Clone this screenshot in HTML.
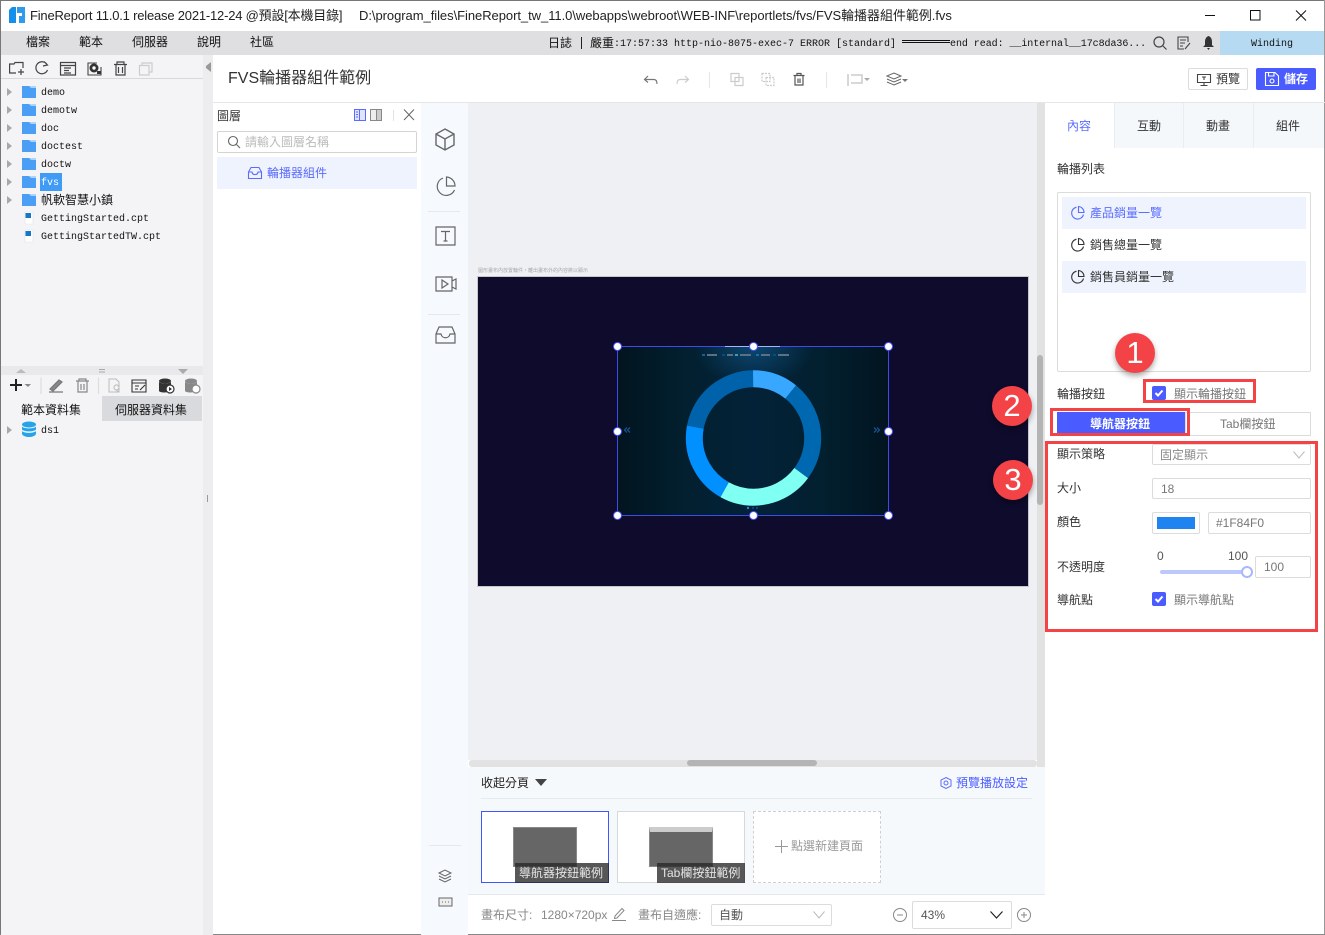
<!DOCTYPE html>
<html><head><meta charset="utf-8"><style>
*{box-sizing:border-box;margin:0;padding:0}
html,body{width:1325px;height:935px;overflow:hidden;background:#fff}
body{position:relative;font-family:"Liberation Sans","Noto Sans CJK TC",sans-serif;font-size:12px;color:#333}
.a{position:absolute}
.t{position:absolute;white-space:nowrap;line-height:16px}
.m{font-family:"Liberation Mono","Noto Sans CJK TC",monospace;font-size:10px;color:#111}
.b{position:absolute;border:1px solid #dcdcdc;background:#fff;border-radius:2px}
.r{position:absolute;border:3px solid #f44347}
.n{position:absolute;width:40px;height:40px;border-radius:50%;background:#f44347;color:#fff;font-size:31px;line-height:40px;text-align:center;box-shadow:0 3px 6px rgba(0,0,0,.35)}
.h{position:absolute;width:9px;height:9px;border-radius:50%;background:#fff;border:1px solid #4a55ff}
svg{position:absolute;overflow:visible;fill:none}
.g{color:#888}
</style></head><body>
<!-- window -->
<div class="a" style="left:0;top:0;width:1325px;height:1px;background:#777"></div>
<div class="a" style="left:0;top:0;width:1px;height:935px;background:#777"></div>
<div class="a" style="left:1324px;top:0;width:1px;height:935px;background:#999"></div>
<div class="a" style="left:0;top:934px;width:1325px;height:1px;background:#888"></div>
<svg style="left:9px;top:7px" width="16" height="17"><path d="M3 0H7V16H0V3Z" fill="#1590e8"/><path d="M8 0H16V16H10V9H13V6H8Z" fill="#2f9bec"/><path d="M7 6H13V9H7Z" fill="#fff"/></svg>
<div class="t" style="left:30px;top:8px;font-size:13px;color:#222;letter-spacing:-.2px">FineReport 11.0.1 release 2021-12-24 @預設[本機目錄]</div>
<div class="t" style="left:359px;top:8px;font-size:13px;color:#222;letter-spacing:-.05px">D:\program_files\FineReport_tw_11.0\webapps\webroot\WEB-INF\reportlets/fvs/FVS輪播器組件範例.fvs</div>
<svg style="left:1205px;top:10px" width="110" height="12" stroke="#111" stroke-width="1"><path d="M0 5.500H10M45.500 .5H55V10H45.500ZM91 .5L101 10.500M101 .5L91 10.500"/></svg>
<!-- menu -->
<div class="a" style="left:1px;top:31px;width:1323px;height:24px;background:#dfdfe1"></div>
<div class="a" style="left:1220px;top:31px;width:104px;height:24px;background:#b6daf2"></div>
<div class="t" style="left:26px;top:34px;font-size:12px;color:#111">檔案</div>
<div class="t" style="left:79px;top:34px;font-size:12px;color:#111">範本</div>
<div class="t" style="left:132px;top:34px;font-size:12px;color:#111">伺服器</div>
<div class="t" style="left:197px;top:34px;font-size:12px;color:#111">說明</div>
<div class="t" style="left:250px;top:34px;font-size:12px;color:#111">社區</div>
<div class="t" style="left:548px;top:35px;font-size:12px;color:#111">日誌</div>
<div class="a" style="left:581px;top:37px;width:1px;height:12px;background:#222"></div>
<div class="t" style="left:590px;top:35px;font-size:12px;color:#111">嚴重</div>
<div class="t m" style="left:614px;top:37px">:17:57:33 http-nio-8075-exec-7 ERROR [standard] <span style="display:inline-block;width:48px;height:3px;border-top:1px solid #111;border-bottom:1px solid #111;vertical-align:3px"></span><span style="letter-spacing:-.06px">end read: __internal__17c8da36...</span></div>
<div class="t m" style="left:1251px;top:37px">Winding</div>
<svg style="left:1153px;top:36px" width="14" height="14" stroke="#444" stroke-width="1.200"><circle cx="6" cy="6" r="5"/><path d="M10 10L13.500 13.500"/></svg>
<svg style="left:1177px;top:36px" width="14" height="14" stroke="#444" stroke-width="1.100"><path d="M11 6V1H1V13H7M3 4H9M3 7H8M3 10H6M8 13L13 7"/></svg>
<svg style="left:1202px;top:36px" width="13" height="14"><path d="M6.500 0C9 1 10 3 10 6V9L12 11H1L3 9V6C3 3 4 1 6.500 0ZM5 12H8L6.500 14Z" fill="#333"/></svg>
<!-- left panel -->
<div class="a" style="left:1px;top:55px;width:202px;height:880px;background:#f4f4f6"></div>
<div class="a" style="left:203px;top:55px;width:10px;height:880px;background:#ededef"></div>
<div class="a" style="left:1px;top:78px;width:202px;height:1px;background:#d8d8da"></div>
<div class="a" style="left:206px;top:62px;border:4px solid transparent;border-right:5px solid #999;border-left:0;height:10px"></div>
<div class="a" style="left:207px;top:495px;width:1px;height:7px;background:#999"></div>
<svg style="left:9px;top:61px" width="150" height="16" stroke="#444" stroke-width="1.200">
<path d="M7 12H.6V3H5L6 1.500H14V7M12 8V14M9 11H15"/>
<path d="M38 3.500A6 6 0 1 0 38.500 9M35 .5L38.500 4L34 5"/>
<path d="M51.500 1.500H66.500V14H51.500ZM51.500 4.500H66.500M55 7H62M55 9.500H60M55 12H62"/>
<path d="M88 2H79V14H92V6" stroke-width="1.100"/><circle cx="85" cy="7" r="4.500" fill="#333" stroke="none"/><circle cx="85" cy="7" r="1.700" fill="#fff" stroke="none"/><rect x="88" y="10" width="4" height="3" fill="#333" stroke="none"/>
<path d="M105 3.500H118M108 3.500V1H115V3.500M107 3.500V14H116V3.500M109.500 6V12M113.500 6V12"/>
<path d="M133 5V2H143V11H140M130.500 4.500H140V14H130.500Z" stroke="#ccc"/>
</svg>
<div class="a" style="left:40px;top:173px;width:22px;height:18px;background:#3f9bf5"></div>
<svg style="left:0;top:0" width="220" height="250">
<g fill="#a8a8a8"><path d="M7 88l5 4-5 4zM7 106l5 4-5 4zM7 124l5 4-5 4zM7 142l5 4-5 4zM7 160l5 4-5 4zM7 178l5 4-5 4zM7 196l5 4-5 4z"/></g>
<g fill="#4a9ff5"><path d="M22 86H36V98H22ZM22 104H36V116H22ZM22 122H36V134H22ZM22 140H36V152H22ZM22 158H36V170H22ZM22 176H36V188H22ZM22 194H36V206H22Z"/></g>
<g fill="#fff"><path d="M29 86H36V88H31ZM29 104H36V106H31ZM29 122H36V124H31ZM29 140H36V142H31ZM29 158H36V160H31ZM29 176H36V178H31ZM29 194H36V196H31Z" opacity=".55"/></g>
<path d="M25 212H33V224H25Z M25 230H33V242H25Z" fill="#fff" stroke="#e2e2e2" stroke-width=".6"/>
<path d="M25.500 213H31V218H25.500ZM25.500 231H31V236H25.500Z" fill="#1677c9"/>
</svg>
<div class="t m" style="left:41px;top:86px">demo</div>
<div class="t m" style="left:41px;top:104px">demotw</div>
<div class="t m" style="left:41px;top:122px">doc</div>
<div class="t m" style="left:41px;top:140px">doctest</div>
<div class="t m" style="left:41px;top:158px">doctw</div>
<div class="t m" style="left:41px;top:176px;color:#fff">fvs</div>
<div class="t" style="left:41px;top:192px;font-size:12px;color:#111">帆軟智慧小鎮</div>
<div class="t m" style="left:41px;top:212px">GettingStarted.cpt</div>
<div class="t m" style="left:41px;top:230px">GettingStartedTW.cpt</div>
<!-- lower left -->
<div class="a" style="left:1px;top:366px;width:202px;height:9px;background:#e9e9eb"></div>
<svg style="left:0;top:366px" width="203" height="9"><path d="M16 7L21 3L26 7Z" fill="#bbb"/><path d="M178 3H188L183 8Z" fill="#aaa"/><path d="M99 3.500H105M99 6H105" stroke="#aaa"/></svg>
<svg style="left:8px;top:377px" width="195" height="18" stroke="#555" stroke-width="1.200">
<path d="M8 2V14M2 8H14" stroke="#222" stroke-width="2"/><path d="M16.500 7H23L20 10Z" fill="#888" stroke="none"/>
<path d="M33 .5V17M90.500 .5V17" stroke="#ddd"/>
<path d="M42 12L51 3L54 5L45 14ZM41 15H55" stroke="#777" fill="#888"/>
<path d="M68 4H81M71 4V2H78V4M70 4V15H79V4M73 7V13M76 7V13" stroke="#888"/>
<path d="M101 2H108L111 5V15H101ZM106 10.500A2.500 2.500 0 1 0 106 10.400M108 13L111 15" stroke="#bbb" stroke-width="1"/>
<path d="M124 3H138V15H124ZM124 6H138M127 9H131M127 12H130M132 13L137 8" stroke="#333" stroke-width="1.100"/>
<ellipse cx="157" cy="4" rx="6" ry="2.500" fill="#333" stroke="none"/><path d="M151 5V14C152 16 160 16 163 14V5C160 7 154 7 151 5Z" fill="#333" stroke="none"/><circle cx="162" cy="12" r="4" fill="#fff" stroke="#333"/><path d="M161 10L164 12L161 14Z" fill="#333" stroke="none"/>
<ellipse cx="183" cy="4" rx="6" ry="2.500" fill="#888" stroke="none"/><path d="M177 5V14C178 16 186 16 189 14V5C186 7 180 7 177 5Z" fill="#888" stroke="none"/><circle cx="188" cy="12" r="4" fill="#fff" stroke="#888"/>
</svg>
<div class="a" style="left:102px;top:396px;width:100px;height:25px;background:#d9dadd"></div>
<div class="t" style="left:21px;top:402px;font-size:12px;color:#111">範本資料集</div>
<div class="t" style="left:115px;top:402px;font-size:12px;color:#111">伺服器資料集</div>
<svg style="left:0;top:420px" width="40" height="20"><path d="M7 6l5 4-5 4z" fill="#a8a8a8"/><ellipse cx="29" cy="4.500" rx="7" ry="3" fill="#27a3ea"/><path d="M22 6.500C24 9 34 9 36 6.500V9.500C34 12 24 12 22 9.500ZM22 11C24 13.500 34 13.500 36 11V14C34 18 24 18 22 14Z" fill="#27a3ea"/></svg>
<div class="t m" style="left:41px;top:424px">ds1</div>
<!-- header -->
<div class="a" style="left:213px;top:102px;width:1112px;height:1px;background:#e6e6e8"></div>
<div class="t" style="left:228px;top:71px;font-size:16px;color:#333">FVS輪播器組件範例</div>
<svg style="left:640px;top:71px" width="280" height="18" stroke="#777" stroke-width="1.200">
<path d="M8 5L4.500 8.500L8 11.500M5 8.500H14C16 8.500 17 10 17 13"/>
<path d="M45 5L48.500 8.500L45 11.500M48 8.500H40C38 8.500 37 10 37 13" stroke="#ccc"/>
<path d="M69.500 1V17M186.500 1V17" stroke="#e8e8e8"/>
<path d="M91 2.500H99V10.500H91ZM95 6.500H103V14.500H95Z" stroke="#ccc"/>
<path d="M122 2.500H130V10.500H122ZM126 6.500H134V14.500H126Z" stroke="#ccc" stroke-dasharray="2 1"/>
<path d="M153.500 4.500H164.500M157 4.500V2.500H161V4.500M155 4.500V14H163V4.500M158 7.500V12M160 7.500V12" stroke="#555"/>
<path d="M208 3V15M211 4H222V12H211" stroke="#ccc" stroke-width="1.500"/><path d="M224 7H230L227 10Z" fill="#aaa" stroke="none"/>
<path d="M247 5L254 2L261 5L254 8ZM247 8L254 11L261 8M247 11L254 14L261 11" stroke="#666" stroke-width="1"/><path d="M262 8H268L265 11Z" fill="#777" stroke="none"/>
</svg>
<div class="b" style="left:1188px;top:68px;width:60px;height:22px"></div>
<svg style="left:1197px;top:73px" width="14" height="13" stroke="#444" stroke-width="1.100"><path d="M.5 1.500H13.500V9.500H.5ZM7 9.500V12.500M3.500 12.500H10.500M5 4H9M7 4V7"/></svg>
<div class="t" style="left:1216px;top:71px;font-size:12px;color:#333">預覽</div>
<div class="a" style="left:1256px;top:68px;width:60px;height:22px;background:#4a5cff;border-radius:2px"></div>
<svg style="left:1265px;top:72px" width="14" height="14" stroke="#fff" stroke-width="1.100"><path d="M.5.5H10L13.500 4V13.500H.5ZM3.500.5V4H9V.5"/><circle cx="7" cy="9" r="2"/></svg>
<div class="t" style="left:1284px;top:71px;font-size:12px;color:#fff;font-weight:bold">儲存</div>
<!-- layers -->
<div class="t" style="left:217px;top:108px;font-size:12px;color:#333">圖層</div>
<svg style="left:354px;top:109px" width="62" height="13"><rect x=".5" y=".5" width="11" height="11" fill="#dfe4ff" stroke="#5a6cff"/><path d="M5.500 .5V11.500M2 3H4M2 5.500H4M2 8H4" stroke="#5a6cff"/><rect x="16.500" y=".5" width="11" height="11" fill="#eee" stroke="#888"/><path d="M22.500 .5V11.500" stroke="#888"/><rect x="23" y="1" width="4" height="10" fill="#ccc"/><path d="M39.500 1V12" stroke="#e3e3e3"/><path d="M50 .5L60 11M60 .5L50 11" stroke="#666"/></svg>
<div class="b" style="left:217px;top:131px;width:200px;height:22px;border-color:#d4d4d4"></div>
<svg style="left:227px;top:135px" width="14" height="14" stroke="#666" stroke-width="1.100"><circle cx="6" cy="6" r="4.500"/><path d="M9.500 9.500L13 13"/></svg>
<div class="t" style="left:245px;top:134px;font-size:12px;color:#bbb">請輸入圖層名稱</div>
<div class="a" style="left:217px;top:157px;width:200px;height:32px;background:#eff3fd"></div>
<svg style="left:248px;top:166px" width="14" height="14" stroke="#5a6cff" stroke-width="1.100"><path d="M3 1.500H11L13.500 6V12.500H.5V6ZM.5 6H4C4.500 9.500 9.500 9.500 10 6H13.500"/></svg>
<div class="t" style="left:267px;top:165px;font-size:12px;color:#5a6cff">輪播器組件</div>
<!-- rail -->
<div class="a" style="left:421px;top:103px;width:47px;height:832px;background:#f6f9fd"></div>
<svg style="left:428px;top:125px" width="36" height="225" stroke="#666" stroke-width="1.400">
<path d="M17 4L26 9V20L17 25L8 20V9ZM8 9L17 14L26 9M17 14V25"/>
<path d="M15 53A9 9 0 1 0 26.500 65M18.500 52A9 9 0 0 1 27 61H18.500Z" stroke-width="1.200"/>
<path d="M0 86.500H32" stroke="#e6e8ea" stroke-width="1"/>
<path d="M8 102H27V120H8ZM13 106.500H22M17.500 106.500V116M15.500 116H19.500" stroke-width="1.200"/>
<path d="M8 152H24V166H8ZM24 156L28 154V164L24 162M14 155V163L20 159Z" stroke-width="1.200"/>
<path d="M0 189.500H32" stroke="#e6e8ea" stroke-width="1"/>
<path d="M11 202H24L27 209V218H8V209ZM8 209H13C14 214 21 214 22 209H27" stroke-width="1.200"/>
</svg>
<div class="a" style="left:429px;top:845px;width:32px;height:1px;background:#e6e8ea"></div>
<svg style="left:438px;top:869px" width="16" height="40" stroke="#666" stroke-width="1"><path d="M1 4L7 1L13 4L7 7ZM1 7L7 10L13 7M1 10L7 13L13 10"/><path d="M1 29H14V37H1Z" fill="#eee"/><path d="M4 33H5M7 33H8M10 33H11"/></svg>
<!-- canvas -->
<div class="a" style="left:468px;top:103px;width:569px;height:657px;background:#eff0f4"></div>
<div class="a" style="left:1037px;top:103px;width:8px;height:664px;background:#e2e2e2"></div>
<div class="a" style="left:1037px;top:355px;width:6px;height:150px;background:#b4b4b4;border-radius:3px"></div>
<div class="t" style="left:478px;top:263px;font-size:5px;color:#aaa">圖形畫布內放置輪件，離出畫布外的內容將以顯示</div>
<div class="a" style="left:477px;top:276px;width:552px;height:311px;background:#0f0b2d;border:1px solid #c8c8cc"></div>
<div class="a" style="left:618px;top:347px;width:271px;height:169px;background:linear-gradient(90deg,#021420 0%,#02202f 25%,#032238 50%,#02202f 75%,#021420 100%)"></div>
<div class="a" style="left:618px;top:347px;width:271px;height:40px;background:radial-gradient(ellipse 22% 100% at 50% 0%,rgba(20,100,160,.55),rgba(0,0,0,0))"></div>
<svg style="left:618px;top:347px" width="271" height="169" viewBox="0 0 271 169">
<g transform="rotate(-90 135.500 91)" fill="none" stroke-width="17">
<circle cx="135.500" cy="91" r="59.200" pathLength="360" stroke="#37a7ff" stroke-dasharray="39 321"/>
<circle cx="135.500" cy="91" r="59.200" pathLength="360" stroke="#0068b0" stroke-dasharray="87.500 272.500" stroke-dashoffset="-39"/>
<circle cx="135.500" cy="91" r="59.200" pathLength="360" stroke="#80fff3" stroke-dasharray="83 277" stroke-dashoffset="-126.500"/>
<circle cx="135.500" cy="91" r="59.200" pathLength="360" stroke="#0090ff" stroke-dasharray="71.500 288.500" stroke-dashoffset="-209.500"/>
<circle cx="135.500" cy="91" r="59.200" pathLength="360" stroke="#0062aa" stroke-dasharray="79 281" stroke-dashoffset="-281"/>
</g>
<path d="M9 80.500L6.500 83L9 85.500M12 80.500L9.500 83L12 85.500M259 80.500L261.500 83L259 85.500M256 80.500L258.500 83L256 85.500" stroke="#1a5fa5" fill="none"/>
<g fill="#1f84f0"><circle cx="130" cy="161" r="1.200"/><circle cx="135" cy="161" r="1" opacity=".5"/><circle cx="139" cy="161" r="1" opacity=".5"/></g>
<g fill="#1f9bf0"><rect x="84" y="7.500" width="3" height="1"/><rect x="104" y="7.500" width="3" height="1" fill="#0068b0"/><rect x="117" y="7.500" width="3" height="1" fill="#80fff3"/><rect x="138" y="7.500" width="3" height="1"/><rect x="155" y="7.500" width="3" height="1" fill="#0068b0"/></g>
<g fill="#5f6f7f"><rect x="89" y="7" width="10" height="2"/><rect x="109" y="7" width="6" height="2"/><rect x="122" y="7" width="11" height="2"/><rect x="143" y="7" width="9" height="2"/><rect x="160" y="7" width="11" height="2"/></g>
</svg>
<div class="a" style="left:617px;top:346px;width:272px;height:170px;border:1px solid #3f4be8"></div>
<div class="a" style="left:725px;top:346px;width:55px;height:1px;background:#a8b4ff"></div>
<div class="h" style="left:613px;top:342px"></div><div class="h" style="left:749px;top:342px"></div><div class="h" style="left:884px;top:342px"></div>
<div class="h" style="left:613px;top:427px"></div><div class="h" style="left:884px;top:427px"></div>
<div class="h" style="left:613px;top:511px"></div><div class="h" style="left:749px;top:511px"></div><div class="h" style="left:884px;top:511px"></div>
<!-- h scroll -->
<div class="a" style="left:469px;top:760px;width:568px;height:7px;background:#e2e2e2;border-radius:3px"></div>
<div class="a" style="left:687px;top:760px;width:130px;height:6px;background:#b4b4b4;border-radius:3px"></div>
<!-- pages -->
<div class="a" style="left:468px;top:767px;width:577px;height:127px;background:#f6f9fc"></div>
<div class="a" style="left:468px;top:894px;width:577px;height:1px;background:#e5e9ef"></div>
<div class="a" style="left:481px;top:798px;width:551px;height:1px;background:#e6ebf0"></div>
<div class="t" style="left:481px;top:775px;font-size:12px;color:#222">收起分頁</div>
<div class="a" style="left:535px;top:779px;border:6px solid transparent;border-top:7px solid #444;border-bottom:0"></div>
<svg style="left:940px;top:777px" width="12" height="12" stroke="#5a6cff" stroke-width="1"><path d="M6 .5L11 3V9L6 11.500L1 9V3Z"/><circle cx="6" cy="6" r="2"/></svg>
<div class="t" style="left:956px;top:775px;font-size:12px;color:#4a5cff">預覽播放設定</div>
<div class="a" style="left:481px;top:811px;width:128px;height:72px;background:#fff;border:1px solid #3f55ff"></div>
<div class="a" style="left:513px;top:827px;width:64px;height:40px;background:#666;border:1px solid #888"></div>
<div class="a" style="left:515px;top:863px;width:94px;height:20px;background:rgba(40,40,40,.78)"></div>
<div class="t" style="left:519px;top:865px;font-size:12px;color:#e4e4e4">導航器按鈕範例</div>
<div class="a" style="left:617px;top:811px;width:128px;height:72px;background:#fff;border:1px solid #d5d9de"></div>
<div class="a" style="left:649px;top:827px;width:64px;height:40px;background:#666;border:1px solid #888;border-top:5px solid #ccc"></div>
<div class="a" style="left:657px;top:863px;width:88px;height:20px;background:rgba(40,40,40,.78)"></div>
<div class="t" style="left:661px;top:865px;font-size:12px;color:#e4e4e4">Tab欄按鈕範例</div>
<div class="a" style="left:753px;top:811px;width:128px;height:72px;background:#fff;border:1px dashed #d0d0d0"></div>
<svg style="left:775px;top:840px" width="13" height="13" stroke="#999"><path d="M6.500 0V13M0 6.500H13"/></svg>
<div class="t" style="left:791px;top:838px;font-size:12px;color:#999">點選新建頁面</div>
<!-- bottom bar -->
<div class="t g" style="left:481px;top:907px;font-size:12px">畫布尺寸:</div>
<div class="t g" style="left:541px;top:907px;font-size:12px">1280×720px</div>
<svg style="left:612px;top:907px" width="14" height="14" stroke="#888"><path d="M3 9L10 1.500L12 3.500L5 11L2.500 11.500ZM0 13.500H14"/></svg>
<div class="t g" style="left:638px;top:907px;font-size:12px">畫布自適應:</div>
<div class="b" style="left:711px;top:904px;width:121px;height:22px"></div>
<div class="t" style="left:719px;top:907px;font-size:12px;color:#555">自動</div>
<svg style="left:813px;top:911px" width="12" height="8" stroke="#bbb"><path d="M.5 .5L6 7L11.500 .5"/></svg>
<svg style="left:893px;top:908px" width="14" height="14" stroke="#888"><circle cx="7" cy="7" r="6.500"/><path d="M4 7H10"/></svg>
<div class="b" style="left:912px;top:901px;width:100px;height:28px"></div>
<div class="t" style="left:921px;top:907px;font-size:12px;color:#555">43%</div>
<svg style="left:990px;top:911px" width="13" height="8" stroke="#222" stroke-width="1.200"><path d="M.5 .5L6.500 7L12.500 .5"/></svg>
<svg style="left:1017px;top:908px" width="14" height="14" stroke="#888"><circle cx="7" cy="7" r="6.500"/><path d="M4 7H10M7 4V10"/></svg>
<!-- right panel -->
<div class="a" style="left:1114px;top:103px;width:210px;height:45px;background:#f5f8fb"></div>
<div class="a" style="left:1114px;top:103px;width:1px;height:45px;background:#e8edf2"></div>
<div class="a" style="left:1183px;top:103px;width:1px;height:45px;background:#e8edf2"></div>
<div class="a" style="left:1253px;top:103px;width:1px;height:45px;background:#e8edf2"></div>
<div class="t" style="left:1067px;top:118px;font-size:12px;color:#5a6cff">內容</div>
<div class="t" style="left:1137px;top:118px;font-size:12px;color:#333">互動</div>
<div class="t" style="left:1206px;top:118px;font-size:12px;color:#333">動畫</div>
<div class="t" style="left:1276px;top:118px;font-size:12px;color:#333">組件</div>
<div class="t" style="left:1057px;top:161px;font-size:12px">輪播列表</div>
<div class="b" style="left:1057px;top:192px;width:254px;height:180px"></div>
<div class="a" style="left:1062px;top:197px;width:244px;height:32px;background:#eef3fe"></div>
<div class="a" style="left:1062px;top:261px;width:244px;height:32px;background:#eef3fe"></div>
<svg style="left:1071px;top:206px" width="14" height="78" fill="none"><g stroke="#5a6cff" stroke-width="1.100"><path d="M5.500 1.200A6 6 0 1 0 12.500 8.500M7.500 .5A6 6 0 0 1 13 6.500H7.500Z"/></g><g stroke="#333" stroke-width="1.100"><path d="M5.500 33.200A6 6 0 1 0 12.500 40.500M7.500 32.500A6 6 0 0 1 13 38.500H7.500Z"/><path d="M5.500 65.200A6 6 0 1 0 12.500 72.500M7.500 64.500A6 6 0 0 1 13 70.500H7.500Z"/></g></svg>
<div class="t" style="left:1090px;top:205px;font-size:12px;color:#5a6cff">產品銷量一覽</div>
<div class="t" style="left:1090px;top:237px;font-size:12px">銷售總量一覽</div>
<div class="t" style="left:1090px;top:269px;font-size:12px">銷售員銷量一覽</div>
<div class="t" style="left:1057px;top:386px;font-size:12px">輪播按鈕</div>
<div class="a" style="left:1152px;top:386px;width:14px;height:14px;background:#4a5cff;border-radius:2px"></div>
<svg style="left:1152px;top:386px" width="14" height="14" stroke="#fff" stroke-width="2"><path d="M3.500 7L6 9.500L10.500 4.500"/></svg>
<div class="t" style="left:1174px;top:386px;font-size:12px;color:#777">顯示輪播按鈕</div>
<div class="a" style="left:1057px;top:412px;width:128px;height:24px;background:#4a5cff"></div>
<div class="t" style="left:1090px;top:416px;font-size:12px;color:#fff;font-weight:bold">導航器按鈕</div>
<div class="b" style="left:1185px;top:412px;width:126px;height:24px;border-radius:0"></div>
<div class="t" style="left:1220px;top:416px;font-size:12px;color:#777">Tab欄按鈕</div>
<div class="t" style="left:1057px;top:446px;font-size:12px">顯示策略</div>
<div class="b" style="left:1152px;top:444px;width:159px;height:21px"></div>
<div class="t" style="left:1160px;top:447px;font-size:12px;color:#888">固定顯示</div>
<svg style="left:1293px;top:451px" width="12" height="8" stroke="#bbb"><path d="M.5 .5L6 7L11.500 .5"/></svg>
<div class="t" style="left:1057px;top:480px;font-size:12px">大小</div>
<div class="b" style="left:1152px;top:478px;width:159px;height:21px"></div>
<div class="t" style="left:1161px;top:481px;font-size:12px;color:#777">18</div>
<div class="t" style="left:1057px;top:514px;font-size:12px">顏色</div>
<div class="b" style="left:1152px;top:512px;width:48px;height:22px"></div>
<div class="a" style="left:1157px;top:517px;width:38px;height:12px;background:#1f84f0"></div>
<div class="b" style="left:1208px;top:512px;width:103px;height:22px"></div>
<div class="t" style="left:1216px;top:515px;font-size:12px;color:#777">#1F84F0</div>
<div class="t" style="left:1157px;top:548px;font-size:12px;color:#555">0</div>
<div class="t" style="left:1228px;top:548px;font-size:12px;color:#555">100</div>
<div class="t" style="left:1057px;top:559px;font-size:12px">不透明度</div>
<div class="a" style="left:1160px;top:570px;width:87px;height:4px;background:#bdc8ff;border-radius:2px"></div>
<div class="a" style="left:1241px;top:566px;width:12px;height:12px;border-radius:50%;background:#fff;border:2px solid #a9b7ff"></div>
<div class="b" style="left:1255px;top:556px;width:56px;height:22px"></div>
<div class="t" style="left:1264px;top:559px;font-size:12px;color:#777">100</div>
<div class="t" style="left:1057px;top:592px;font-size:12px">導航點</div>
<div class="a" style="left:1152px;top:592px;width:14px;height:14px;background:#4a5cff;border-radius:2px"></div>
<svg style="left:1152px;top:592px" width="14" height="14" stroke="#fff" stroke-width="2"><path d="M3.500 7L6 9.500L10.500 4.500"/></svg>
<div class="t" style="left:1174px;top:592px;font-size:12px;color:#777">顯示導航點</div>
<!-- annotations -->
<div class="r" style="left:1143px;top:379px;width:113px;height:24px"></div>
<div class="r" style="left:1050px;top:408px;width:140px;height:28px"></div>
<div class="r" style="left:1045px;top:441px;width:273px;height:191px"></div>
<div class="n" style="left:1115px;top:333px">1</div>
<div class="n" style="left:992px;top:386px">2</div>
<div class="n" style="left:993px;top:460px">3</div>
</body></html>
